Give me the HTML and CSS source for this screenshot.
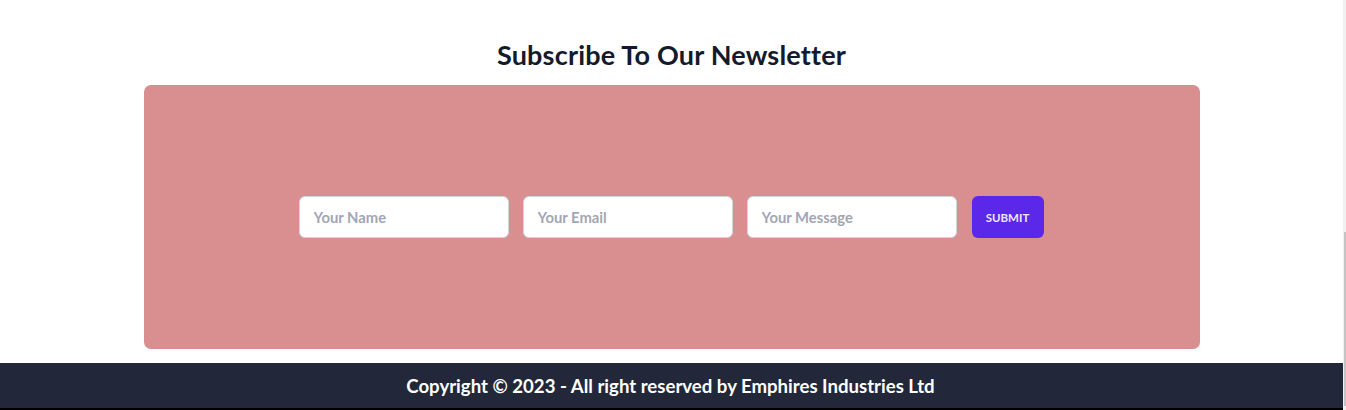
FILE: index.html
```html
<!DOCTYPE html>
<html lang="en">
<head>
<meta charset="utf-8">
<title>Newsletter</title>
<link rel="stylesheet" href="styles.css">
</head>
<body>
<div class="page">
  <section class="newsletter">
    <h2 class="title">Subscribe To Our Newsletter</h2>
    <div class="card">
      <form class="form">
        <input class="field" type="text" placeholder="Your Name">
        <input class="field" type="email" placeholder="Your Email">
        <input class="field" type="text" placeholder="Your Message">
        <button class="submit" type="button">SUBMIT</button>
      </form>
    </div>
  </section>
  <footer class="footer">
    <p class="copy">Copyright © 2023 - All right reserved by Emphires Industries Ltd</p>
  </footer>
  <div class="bottom-line"></div>
</div>
<div class="scrollbar"><div class="thumb"></div></div>
</body>
</html>
```
FILE: styles.css
```css
* { box-sizing: border-box; }
html, body { margin: 0; padding: 0; background: #ffffff; }
body {
  font-family: "Lato", "Open Sans", sans-serif;
  width: 1343px;
  overflow: hidden;
}
.page { display: flex; flex-direction: column; }
.newsletter {
  display: flex;
  flex-direction: column;
  align-items: center;
  padding-top: 36px;
}
.title {
  margin: 0;
  font-size: 27px;
  line-height: 37px;
  font-weight: 700;
  color: #141a2b;
  letter-spacing: 0.2px;
}
.card {
  margin-top: 12px;
  width: 1056px;
  height: 264px;
  background: #d98f8f;
  border-radius: 7px;
  display: flex;
  align-items: center;
  justify-content: center;
  padding-right: 1px;
}
.form { display: flex; gap: 14px; align-items: center; }
.field {
  width: 210px;
  height: 42px;
  border: 1px solid #d1d5db;
  border-radius: 6px;
  background: #fff;
  padding: 0 14px;
  font-family: inherit;
  font-size: 14.8px;
  font-weight: 700;
  color: #374151;
  outline: none;
}
.field::placeholder { color: #a3a6b4; }
.submit {
  width: 72px;
  height: 42px;
  margin-left: 1px;
  border: none;
  border-radius: 6px;
  background: #5b27e9;
  color: #ece8fb;
  font-family: inherit;
  font-size: 11.5px;
  font-weight: 700;
  padding: 0;
}
.footer {
  margin-top: 14px;
  height: 45px;
  background: #222839;
  display: flex;
  align-items: center;
  justify-content: center;
}
.copy {
  margin: 0;
  color: #ffffff;
  font-size: 18.6px;
  font-weight: 700;
  padding-right: 2px;
}
.bottom-line { height: 2px; background: #000; }
.scrollbar {
  position: fixed;
  top: 0;
  right: 0;
  width: 3px;
  height: 410px;
  background: #f1f1f1;
}
.thumb {
  position: absolute;
  top: 232px;
  left: 1px;
  width: 2px;
  height: 174px;
  background: #c4c4c4;
}
```
